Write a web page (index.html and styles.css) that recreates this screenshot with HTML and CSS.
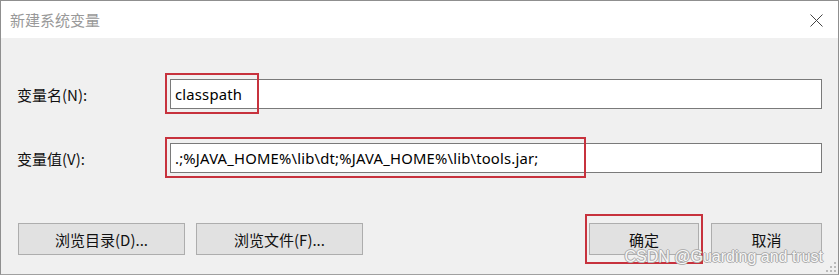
FILE: index.html
```html
<!DOCTYPE html>
<html lang="zh-CN">
<head>
    <meta charset="UTF-8">
    <title>新建系统变量</title>
    <link rel="stylesheet" href="styles.css">
</head>
<body>
    <div class="dialog">
        <div class="title-bar">
            <span class="title">新建系统变量</span>
            <svg class="close" width="13" height="13" viewBox="0 0 13 13">
                <path d="M0.5 0.5 L12.5 12.5 M12.5 0.5 L0.5 12.5" stroke="#444" stroke-width="1" fill="none"/>
            </svg>
        </div>
        <div class="content">
            <div class="row">
                <label class="label">变量名(N):</label>
                <div class="field">
                    <input class="text" type="text" value="classpath" readonly>
                    <span class="mark mark-name"></span>
                </div>
            </div>
            <div class="row row-value">
                <label class="label">变量值(V):</label>
                <div class="field">
                    <input class="text" type="text" value=".;%JAVA_HOME%\lib\dt;%JAVA_HOME%\lib\tools.jar;" readonly>
                    <span class="mark mark-value"></span>
                </div>
            </div>
            <div class="buttons">
                <div class="btn-group">
                    <button class="btn btn-wide">浏览目录(D)...</button>
                    <button class="btn btn-wide">浏览文件(F)...</button>
                </div>
                <div class="btn-group">
                    <span class="btn-wrap">
                        <button class="btn btn-ok">确定</button>
                        <span class="mark mark-ok"></span>
                    </span>
                    <button class="btn btn-cancel">取消</button>
                </div>
            </div>
        </div>
        <span class="watermark">CSDN @Guarding and trust</span>
        <svg class="grip" width="10" height="10" viewBox="0 0 10 10">
            <rect x="8" y="0" width="2" height="2" fill="#bbb"/>
            <rect x="4" y="4" width="2" height="2" fill="#bbb"/>
            <rect x="8" y="4" width="2" height="2" fill="#bbb"/>
            <rect x="0" y="8" width="2" height="2" fill="#bbb"/>
            <rect x="4" y="8" width="2" height="2" fill="#bbb"/>
            <rect x="8" y="8" width="2" height="2" fill="#bbb"/>
        </svg>
    </div>
</body>
</html>
```

FILE: styles.css
```css
*{
    margin: 0;
    padding: 0;
    box-sizing: border-box;
}
body{
    background: #f0f0f0;
    font-family: "Noto Sans", "Noto Sans CJK SC", sans-serif;
}
.dialog{
    position: relative;
    width: 839px;
    height: 275px;
    border: 1px solid #8f8f8f;
    border-bottom-color: #a0a0a0;
    background: #f0f0f0;
    display: flex;
    flex-direction: column;
}
.title-bar{
    height: 37px;
    background: #fff;
    display: flex;
    align-items: center;
    padding: 0 15px 0 9px;
}
.title{
    font-family: "Noto Sans CJK SC", sans-serif;
    font-size: 15px;
    color: #999;
    margin-top: -1px;
}
.close{
    margin-left: auto;
    margin-top: 1px;
}
.content{
    flex: 1;
    padding: 41px 16px 0 16px;
}
.row{
    display: flex;
    align-items: center;
    height: 30px;
}
.row-value{
    margin-top: 34px;
}
.label{
    width: 153px;
    font-family: "Noto Sans CJK SC", sans-serif;
    font-size: 15px;
    color: #111;
}
.field{
    position: relative;
    flex: 1;
    height: 30px;
}
.text{
    width: 100%;
    height: 30px;
    border: 1px solid #7a7a7a;
    background: #fff;
    padding: 0 4px;
    font-family: "Noto Sans", "Noto Sans CJK SC", sans-serif;
    font-size: 14.8px;
    letter-spacing: 0.2px;
    color: #000;
    outline: none;
}
.mark{
    position: absolute;
    border: 2px solid #c7323d;
    pointer-events: none;
}
.mark-name{
    left: -5px;
    top: -6px;
    width: 94px;
    height: 41px;
}
.mark-value{
    left: -5px;
    top: -6px;
    width: 421px;
    height: 41px;
}
.buttons{
    display: flex;
    justify-content: space-between;
    margin-top: 50px;
    padding-left: 1px;
}
.btn-group{
    display: flex;
    gap: 11px;
}
.btn-group + .btn-group{
    gap: 12px;
}
.btn-wrap{
    position: relative;
}
.btn{
    height: 32px;
    background: #e1e1e1;
    border: 1px solid #adadad;
    font-family: "Noto Sans CJK SC", sans-serif;
    font-size: 15px;
    line-height: 1;
    color: #111;
}
.btn-wide{
    width: 167px;
}
.btn-ok{
    width: 110px;
}
.btn-cancel{
    width: 111px;
}
.mark-ok{
    left: -4px;
    top: -9px;
    width: 118px;
    height: 50px;
}
.watermark{
    position: absolute;
    right: 15px;
    bottom: 9px;
    font-family: "Liberation Sans", Arial, sans-serif;
    font-size: 16px;
    line-height: 1;
    color: #f7f7f7;
    text-shadow: 1px 0 #a8a8a8, -1px 0 #a8a8a8, 0 1px #b0b0b0, 0 -1px #b0b0b0;
}
.grip{
    position: absolute;
    right: 2px;
    bottom: 2px;
}
```
